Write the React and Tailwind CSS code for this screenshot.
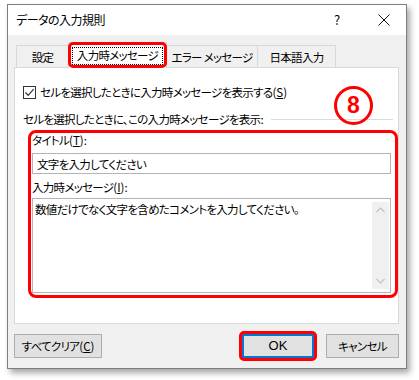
import React from "react";

const F = "font-['Noto_Sans_CJK_JP','Noto_Sans',sans-serif] [font-feature-settings:'palt']";

function Check() {
  return (
    <svg width="11" height="11" viewBox="0 0 11 11" className="block">
      <path d="M1.5 5.5 L4.2 8.3 L9.6 2.2" fill="none" stroke="#333" strokeWidth="1.2" />
    </svg>
  );
}

function Acc({ k }) {
  return (
    <span className="tracking-normal">
      (<u>{k}</u>)
    </span>
  );
}

export default function App() {
  return (
    <div className={`w-[419px] h-[380px] bg-white relative ${F} text-[11.5px] tracking-[-0.7px] leading-[16px] text-black whitespace-nowrap`}>
      <div className="absolute left-[7px] top-[4px] w-[400px] h-[365px] border border-[#7d7d7d] bg-[#f0f0f0] shadow-[3px_4px_6px_rgba(0,0,0,0.35)] flex flex-col">
        {/* title bar */}
        <div className="h-[30px] bg-white flex items-center pl-[8px]">
          <span className="flex-1 text-[12px] tracking-[-0.5px]">データの入力規則</span>
          <span className="w-[10px] text-center mr-[36px] text-[13px] tracking-normal">?</span>
          <svg width="12" height="12" viewBox="0 0 12 12" className="mr-[16px]">
            <path d="M0.5 0.5 L11.5 11.5 M11.5 0.5 L0.5 11.5" stroke="#111" strokeWidth="1" />
          </svg>
        </div>
        {/* body */}
        <div className="flex flex-col pt-[7px] pl-[6px] pr-[7px] pb-[10px]">
          {/* tabs */}
          <div className="h-[25px] flex items-end pl-[2px]">
            <div className="w-[52px] h-[22px] border-l border-t border-[#d9d9d9] bg-[#f0f0f0] flex items-center justify-center">設定</div>
            <div className="relative z-10 w-[99px] h-[26px] -mb-px bg-white border-x border-t border-[#d9d9d9] flex items-center justify-center">
              <span className="w-[91px] h-[18px] border border-dotted border-black flex items-center justify-center leading-[15px]">入力時メッセージ</span>
              <span className="absolute -inset-x-px -top-px bottom-0 border-[3px] border-[#ff0000] rounded-[5px]"></span>
            </div>
            <div className="w-[91px] h-[22px] border-r border-t border-[#d9d9d9] bg-[#f0f0f0] flex items-center justify-center">エラー メッセージ</div>
            <div className="w-[78px] h-[22px] border-r border-t border-[#d9d9d9] bg-[#f0f0f0] flex items-center justify-center">日本語入力</div>
          </div>
          {/* panel */}
          <div className="relative h-[257px] bg-white border border-[#d9d9d9] flex flex-col pl-[8px] pr-[5px] pt-[16px]">
            <div className="h-[16px] flex items-center">
              <span className="w-[13px] h-[13px] border border-[#333] flex items-center justify-center mr-[4px]">
                <Check />
              </span>
              <span>セルを選択したときに入力時メッセージを表示する<Acc k="S" /></span>
            </div>
            <div className="mt-[11px] h-[16px] flex items-center">
              <span>セルを選択したときに、この入力時メッセージを表示:</span>
              <span className="flex-1 h-px bg-[#dcdcdc] ml-[8px]"></span>
            </div>
            <div className="relative ml-[9px] mr-[2px] mt-[5px] flex flex-col">
              <span className="h-[16px]">タイトル<Acc k="T" />:</span>
              <div className="mt-[5px] h-[21px] border border-[#b4b4b4] bg-white flex items-center pl-[4px]">文字を入力してください</div>
              <span className="mt-[5px] h-[16px]">入力時メッセージ<Acc k="I" />:</span>
              <div className="mt-[3px] h-[95px] border border-[#b4b4b4] bg-white flex">
                <div className="flex-1 pl-[2px] pt-[2px]">数値だけでなく文字を含めたコメントを入力してください。</div>
                <div className="w-[17px] my-[3px] mr-px bg-[#f0f0f0] flex flex-col justify-between items-center py-[5px]">
                  <svg width="9" height="6" viewBox="0 0 9 6"><path d="M0.5 5 L4.5 1 L8.5 5" fill="none" stroke="#c2c2c2" strokeWidth="1.2" /></svg>
                  <svg width="9" height="6" viewBox="0 0 9 6"><path d="M0.5 1 L4.5 5 L8.5 1" fill="none" stroke="#c2c2c2" strokeWidth="1.2" /></svg>
                </div>
              </div>
              <span className="absolute -left-[4px] -top-[2px] -right-[7px] -bottom-[5px] border-[3px] border-[#ff0000] rounded-[8px]"></span>
            </div>
            <div className="absolute left-[319px] top-[18px] w-[39px] h-[39px] rounded-full border-[3px] border-[#ff0000] flex items-center justify-center">
              <span className="font-['Liberation_Sans',sans-serif] font-bold text-[23px] leading-none tracking-normal text-[#ff0000]">8</span>
            </div>
          </div>
          {/* buttons */}
          <div className="mt-[10px] h-[24px] flex">
            <div className="w-[88px] h-[24px] border border-[#adadad] bg-[#e1e1e1] flex items-center justify-center">すべてクリア<Acc k="C" /></div>
            <div className="flex-1"></div>
            <div className="relative w-[72px] h-[24px] border-2 border-[#0078d7] bg-[#e1e1e1] flex items-center justify-center font-['Liberation_Sans',sans-serif] text-[13px] tracking-normal">
              OK
              <span className="absolute -inset-[5px] border-[3px] border-[#ff0000] rounded-[5px]"></span>
            </div>
            <div className="w-[73px] h-[24px] ml-[12px] border border-[#adadad] bg-[#e1e1e1] flex items-center justify-center">キャンセル</div>
          </div>
        </div>
      </div>
    </div>
  );
}
